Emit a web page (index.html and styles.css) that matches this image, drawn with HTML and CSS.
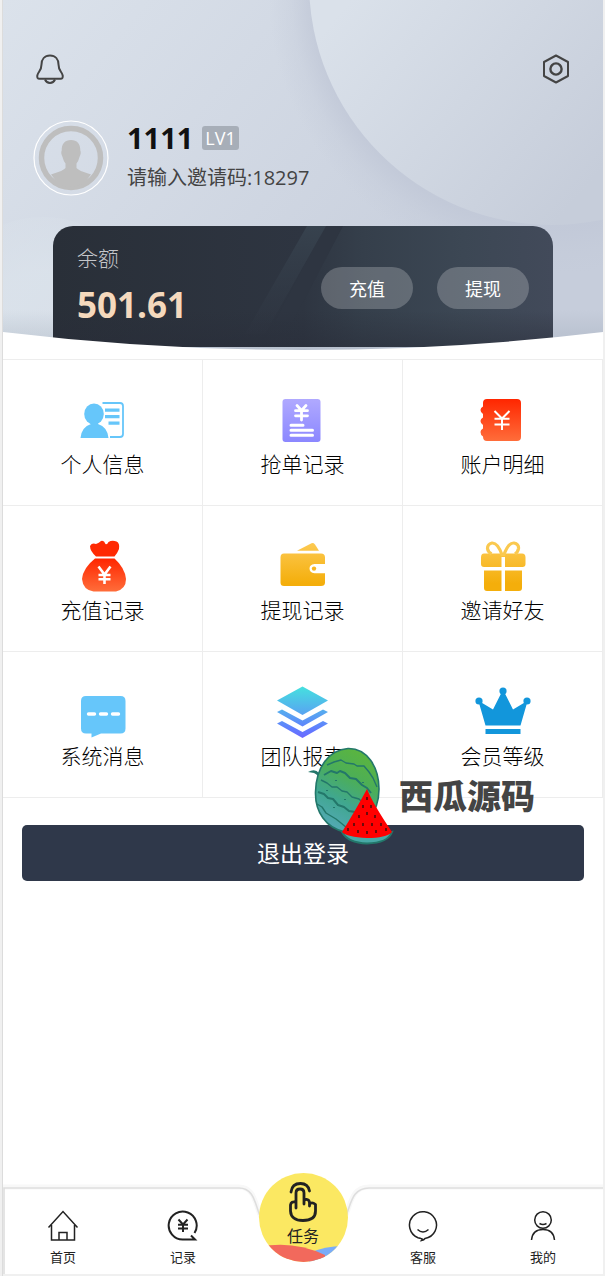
FILE: index.html
```html
<!DOCTYPE html>
<html lang="zh-CN">
	<head>
		<meta charset="utf-8" />
		<meta name="viewport" content="width=device-width, initial-scale=1">
		<title>我的</title>
		<link rel="stylesheet" href="styles.css">
	</head>
	<body>

		<div class="app">

			<!-- 头部 -->
			<div class="header">
				<svg class="header-bg" viewBox="0 0 600 359" preserveAspectRatio="none">
					<defs>
						<linearGradient id="bg" x1="0" y1="0" x2="1" y2="0.5">
							<stop offset="0" stop-color="#dbe2eb" />
							<stop offset="1" stop-color="#c6cddb" />
						</linearGradient>
						<linearGradient id="ball" gradientUnits="userSpaceOnUse" x1="330" y1="20" x2="560" y2="215">
							<stop offset="0" stop-color="#dae1ea" />
							<stop offset="1" stop-color="#c6cdda" />
						</linearGradient>
						<radialGradient id="shade">
							<stop offset="0.84" stop-color="#c2c9d8" stop-opacity="0.9" />
							<stop offset="0.92" stop-color="#c2c9d8" stop-opacity="0.3" />
							<stop offset="1" stop-color="#c2c9d8" stop-opacity="0" />
						</radialGradient>
						<radialGradient id="glow">
							<stop offset="0.5" stop-color="#dce4ec" stop-opacity="0.7" />
							<stop offset="1" stop-color="#dce4ec" stop-opacity="0.2" />
						</radialGradient>
						<linearGradient id="edge" x1="0" y1="0" x2="0" y2="1">
							<stop offset="0" stop-color="#9aa5b3" stop-opacity="0" />
							<stop offset="1" stop-color="#9aa5b3" stop-opacity="0.5" />
						</linearGradient>
					</defs>
					<rect width="600" height="359" fill="url(#bg)" />
					<circle cx="40" cy="325" r="108" fill="url(#glow)" />
					<circle cx="549" cy="-10" r="284" fill="url(#shade)" />
					<circle cx="549" cy="-18" r="243" fill="url(#ball)" />
					<rect y="310" width="600" height="49" fill="url(#edge)" />
				</svg>

				<div class="tools">
					<button class="tool" aria-label="消息">
						<svg width="30" height="30" viewBox="0 0 30 30" fill="none" stroke="#444" stroke-width="2">
							<path d="M15 1.500C9.500 1.500 6.500 5.500 6.500 10.500C6.500 17 3 17.500 2.300 21.500Q1.800 24.800 4.500 24.800H25.500Q28.200 24.800 27.700 21.500C27 17.500 23.500 17 23.500 10.500C23.500 5.500 20.500 1.500 15 1.500Z" />
							<path d="M10 25.500Q11.500 29 15 29Q18.500 29 20 25.500" />
						</svg>
					</button>
					<button class="tool" aria-label="设置">
						<svg width="30" height="30" viewBox="0 0 30 30" fill="none" stroke="#444" stroke-width="2">
							<path d="M15 1.500L27 8V22L15 28.500L3 22V8Z" stroke-linejoin="round" />
							<circle cx="15" cy="15" r="5.600" stroke-width="2.400" />
						</svg>
					</button>
				</div>

				<div class="user">
					<svg class="avatar" viewBox="0 0 76 76">
						<circle cx="38" cy="38" r="37" fill="none" stroke="#fff" stroke-width="1.200" />
						<circle cx="38" cy="38" r="29.500" fill="none" stroke="#bebebe" stroke-width="5.500" />
						<path d="M38 20C44 20 47.500 24 47.300 30.500Q48.500 33 46.500 37Q45.500 41 43.500 43.500V48Q45 50.500 58 54.500Q50 67 38 67Q26 67 18 54.500Q31 50.500 32.500 48V43.500Q30.500 41 29.500 37Q27.500 33 28.700 30.500C28.500 24 32 20 38 20Z" fill="#bebebe" />
					</svg>
					<div class="user-info">
						<div class="name-row">
							<strong class="name">1111</strong>
							<span class="level">LV1</span>
						</div>
						<div class="invite">请输入邀请码:18297</div>
					</div>
				</div>

				<div class="card">
					<svg class="card-bg" viewBox="0 0 500 121" preserveAspectRatio="none">
						<defs>
							<linearGradient id="cardFill">
								<stop offset="0" stop-color="#292f38" />
								<stop offset="0.5" stop-color="#2e3541" />
								<stop offset="0.62" stop-color="#353f4b" />
								<stop offset="0.82" stop-color="#3c4754" />
								<stop offset="1" stop-color="#424a5a" />
							</linearGradient>
							<linearGradient id="stripe" x1="0" y1="0" x2="0" y2="1">
								<stop offset="0" stop-color="#37424e" />
								<stop offset="1" stop-color="#303743" stop-opacity="0.300" />
							</linearGradient>
							<linearGradient id="cardShade" x1="0" y1="0" x2="0" y2="1">
								<stop offset="0.700" stop-color="#282c38" stop-opacity="0" />
								<stop offset="1" stop-color="#282c38" stop-opacity="0.500" />
							</linearGradient>
						</defs>
						<rect width="500" height="121" fill="url(#cardFill)" />
						<path d="M272 0H290L240 95H222Z" fill="#2e3541" />
						<path d="M254 0H273L212 108H192Z" fill="url(#stripe)" />
						<rect width="500" height="121" fill="url(#cardShade)" />
					</svg>
					<div class="balance">
						<div class="balance-label">余额</div>
						<div class="balance-num">501.61</div>
					</div>
					<div class="card-btns">
						<button class="card-btn">充值</button>
						<button class="card-btn">提现</button>
					</div>
				</div>

				<!-- 底部弧形 -->
				<svg class="curve" viewBox="0 0 600 27" preserveAspectRatio="none">
					<path d="M0 0Q300 36 600 0V27H0Z" fill="#fff" />
				</svg>
			</div>

			<!-- 九宫格 -->
			<div class="menu">
				<a class="menu-item" href="#">
					<svg class="menu-icon" viewBox="0 0 60 60">
						<g fill="#66c6fa">
							<ellipse cx="21" cy="24" rx="9.800" ry="10.600" />
							<path d="M18 31H25V34Q34.500 37 35.500 48H7.500Q8.500 37 18 34Z" />
							<path d="M32 18.500H46.500V21.700H32ZM32 25H46.500V28.200H32ZM35.500 31.500H46.500V34.700H35.500Z" />
						</g>
						<path d="M29.500 13H47Q50 13 50 16V44Q50 47 47 47H37" fill="none" stroke="#66c6fa" stroke-width="1.800" />
					</svg>
					<span>个人信息</span>
				</a>
				<a class="menu-item" href="#">
					<svg class="menu-icon" viewBox="0 0 60 60">
						<defs>
							<linearGradient id="purple" x1="0" y1="0" x2="0" y2="1">
								<stop offset="0" stop-color="#b0a9ff" />
								<stop offset="1" stop-color="#8b87ff" />
							</linearGradient>
						</defs>
						<rect x="9.500" y="9" width="38" height="43" rx="3" fill="url(#purple)" />
						<path d="M24 15.500L28.500 20.500L33 15.500M28.500 20V30M22.500 20.700H34.500M22.500 25.800H34.500" stroke="#fff" stroke-width="2.800" stroke-linecap="round" fill="none" />
						<path d="M18 35.200H30M18 40.200H39.500M18 45.200H39.500" stroke="#fff" stroke-width="3" stroke-linecap="round" />
					</svg>
					<span>抢单记录</span>
				</a>
				<a class="menu-item" href="#">
					<svg class="menu-icon" viewBox="0 0 60 60">
						<defs>
							<linearGradient id="red" x1="0" y1="0" x2="0" y2="1">
								<stop offset="0" stop-color="#ff2600" />
								<stop offset="1" stop-color="#ff6d3a" />
							</linearGradient>
						</defs>
						<path d="M14 9H44Q48 9 48 13V47Q48 51 44 51H14Q10 51 10 46.500Q7.500 45 7.500 42Q7.500 39.500 10 38.500V35Q7.500 33.500 7.500 31Q7.500 28.500 10 27.500V24Q7.500 22.500 7.500 20Q7.500 17.500 10 16.500V13Q10 9 14 9Z" fill="url(#red)" />
						<path d="M21.500 21L29 28.500L36.500 21M29 28.500V40M21.500 28.800H36.500M21.500 34.500H36.500" stroke="#fff" stroke-width="2" fill="none" />
					</svg>
					<span>账户明细</span>
				</a>
				<a class="menu-item" href="#">
					<svg class="menu-icon" viewBox="0 0 60 60">
						<path d="M23 20.500Q17 15 17 10Q19 6.500 23 8Q26 7 28 5Q31 4 32.500 8Q34 9 35.500 6Q39 4 43.500 5.500Q47 7 46 13Q44 18 41.500 20.500Z" fill="#ff2a03" />
						<path d="M22 22.500H41.500Q52 32 53 43Q53 53 43 55.500H20.500Q10 54 9 43Q10 32 22 22.500Z" fill="url(#red)" />
						<path d="M25.500 30.500L31.500 38.500L37.500 30.500M31.500 38.500V48M25.500 39H37.500M25.500 43.200H37.500" stroke="#fff" stroke-width="2.600" fill="none" />
					</svg>
					<span>充值记录</span>
				</a>
				<a class="menu-item" href="#">
					<svg class="menu-icon" viewBox="0 0 60 60">
						<defs>
							<linearGradient id="gold" gradientUnits="userSpaceOnUse" x1="0" y1="5" x2="0" y2="55">
								<stop offset="0" stop-color="#fdcb55" />
								<stop offset="0.850" stop-color="#f4ae0b" />
								<stop offset="1" stop-color="#f4ae0b" />
							</linearGradient>
						</defs>
						<path d="M24 14.800L38.500 7.200Q40.500 6.500 42 8.500L46 14.800Z" fill="url(#gold)" />
						<path d="M11 17.500H48Q52 17.500 52 21.500V28H41.500Q36.500 28.500 36.500 32.500Q36.500 36.500 41.500 37.200H52V46.500Q52 50 48 50H11Q7.500 50 7.500 46.500V21.500Q7.500 17.500 11 17.500Z" fill="url(#gold)" />
						<circle cx="41" cy="32.600" r="2.200" fill="#f7b622" />
					</svg>
					<span>提现记录</span>
				</a>
				<a class="menu-item" href="#">
					<svg class="menu-icon" viewBox="0 0 60 60">
						<path d="M11 17.500H49Q52.500 17.500 52.500 21.500V28Q52.500 31 49.500 31H32V21H28.500V31H11Q8 31 8 28V21.500Q8 17.500 11 17.500ZM11 34.500H28.500V55H14Q11 55 11 52ZM32 34.500H49V52Q49 55 46 55H32Z" fill="url(#gold)" />
						<path d="M29.500 20Q25 6.500 19 7Q14.500 8 14.500 12.500Q15 16 18.500 18M30.500 20Q35 6.500 41 7Q46 8 45.500 12.500Q45 16 42 18" fill="none" stroke="#fac94f" stroke-width="3.200" />
					</svg>
					<span>邀请好友</span>
				</a>
				<a class="menu-item" href="#">
					<svg class="menu-icon" viewBox="0 0 60 60">
						<path d="M13 14H47.500Q52.500 14 52.500 19V46.500Q52.500 51.500 47.500 51.500H28L18.500 55.500V51.500H13Q8 51.500 8 46.500V19Q8 14 13 14Z" fill="#66c6fa" />
						<path d="M15.500 32H21.500M27.500 32H33.500M39.500 32H45.500" stroke="#fff" stroke-width="3.400" stroke-linecap="round" />
					</svg>
					<span>系统消息</span>
				</a>
				<a class="menu-item" href="#">
					<svg class="menu-icon" viewBox="0 0 60 60">
						<defs>
							<linearGradient id="stack" gradientUnits="userSpaceOnUse" x1="0" y1="5" x2="0" y2="56">
								<stop offset="0" stop-color="#45e0df" />
								<stop offset="0.500" stop-color="#57a8f0" />
								<stop offset="0.850" stop-color="#6179ff" />
								<stop offset="1" stop-color="#6c68ff" />
							</linearGradient>
						</defs>
						<path d="M29.500 4.500L55 18.500L29.500 33L4 18.500ZM4 30L9 27.500L29.500 38.500L50 27.500L55 30L29.500 44.500ZM4 41.500L9 39L29.500 50L50 39L55 41.500L29.500 56Z" fill="url(#stack)" />
					</svg>
					<span>团队报表</span>
				</a>
				<a class="menu-item" href="#">
					<svg class="menu-icon" viewBox="0 0 60 60">
						<g fill="#1296db">
							<circle cx="30" cy="9" r="3.600" />
							<circle cx="6" cy="19" r="3.600" />
							<circle cx="54" cy="19" r="3.600" />
							<path d="M28.800 10H31.200L40 27.500L52.500 20L54 21L47.500 43.500H12.500L6 21L7.500 20L20 27.500ZM12.500 47H47.500V52H12.500Z" />
						</g>
					</svg>
					<span>会员等级</span>
				</a>
			</div>

			<div class="logout-box">
				<button class="logout">退出登录</button>

				<!-- 水印 -->
				<div class="watermark">
					<svg width="90" height="98" viewBox="0 0 90 98">
						<defs>
							<linearGradient id="melon" x1="0.700" y1="0" x2="0.300" y2="1">
								<stop offset="0" stop-color="#5cb53d" />
								<stop offset="0.350" stop-color="#4cae57" />
								<stop offset="0.650" stop-color="#40a78f" />
								<stop offset="1" stop-color="#55a9b8" />
							</linearGradient>
						</defs>
						<path d="M1 25Q8 21 12 26Q14 29 18 29L16 34Q11 28 7 26Z" fill="#23776a" />
						<path d="M41 1.500C60 1 72 20 72 42C72 67 55 85 38 85C19 81 8 65 8.500 45C9 20 22 3 41 1.500Z" fill="url(#melon)" stroke="#23776a" stroke-width="1.600" />
						<g fill="none" stroke="#23776a" stroke-width="1.400" stroke-linejoin="round">
							<path d="M20 18L27 15L34 13L39 16L47 17L50 19L57 19L62 25L66 31L70 40" />
							<path d="M17 28L24 24L30 26L33 24L38 26L43 31L49 32L55 38L60 41L64 46" stroke-width="2" />
							<path d="M14 33L20 36L25 40L30 40L35 44L40 45L45 50L52 52L57 57" />
							<path d="M11 45L17 47L21 51L26 52L31 58L37 60L42 64L48 65" stroke-width="2" />
							<path d="M10 57L15 60L19 66L24 69L29 72L34 76L40 81" />
						</g>
						<path d="M29 33V34M20 43V44M38 52V53M27 60V61M56 35V36" stroke="#23776a" stroke-width="2" />
						<path d="M35 85Q60 93 85 85Q81 96 60 96.500Q41 96 35 85Z" fill="#48a9a6" stroke="#23776a" stroke-width="2" />
						<path d="M60 42Q66 57 85 85Q79 91 60 91Q40 90 35 85Q47 66 60 42Z" fill="#f00" />
						<path d="M60 50V53M56 58V61M64 58V61M60 65V68M52 68V71M68 68V71M47 76V79M56 76V79M65 76V79M74 76V79M41 81V84M51 83V86M60 84V87M69 83V86M79 81V84" stroke="#4a0d0d" stroke-width="1.600" />
					</svg>
					<span>西瓜源码</span>
				</div>
			</div>

			<!-- 底部导航 -->
			<div class="tabbar">
				<svg class="tabbar-bg" viewBox="0 0 600 96" preserveAspectRatio="none">
					<path d="M0 10H236C252 10 252 30 258 38V96H342V38C348 30 348 10 366 10H600V96H0Z" fill="#fff" />
					<path d="M0 9H236C252 9 252 27 258 39M342 39C348 27 348 9 366 9H600" fill="none" stroke="#f8f8f8" stroke-width="5" />
					<path d="M1 96V10H236C252 10 252 28 258 40M342 40C348 28 348 10 366 10H600" fill="none" stroke="#dedede" stroke-width="1.600" />
				</svg>
				<a class="tab" href="#">
					<svg width="32" height="32" viewBox="0 0 32 32" fill="none" stroke="#222" stroke-width="1.500">
						<path d="M1.500 17.500L16 1.500L30.500 17.500M4.500 15V30H27.500V15M12 30V22.500H20V30" />
					</svg>
					<span>首页</span>
				</a>
				<a class="tab" href="#">
					<svg width="32" height="32" viewBox="0 0 32 32" fill="none" stroke="#222" stroke-width="2">
						<path d="M27.500 23A14 14 0 1 0 16 29.500H28L24 25.500" />
						<path d="M11.500 9.500L16 14.500L20.500 9.500M16 14V22M11 14.800H21M11 18.500H21" />
					</svg>
					<span>记录</span>
				</a>
				<a class="tab tab-task" href="#">
					<svg class="task-bg" viewBox="0 0 89 89">
						<defs>
							<clipPath id="round"><circle cx="44.500" cy="44.500" r="44.500" /></clipPath>
						</defs>
						<g clip-path="url(#round)">
							<rect width="89" height="89" fill="#fbe862" />
							<path d="M50 80Q68 72 89 73V89H50Z" fill="#7aacf8" />
							<path d="M0 74Q34 67 66 82V89H0Z" fill="#f2695c" />
						</g>
						<g transform="translate(30 9)" fill="none" stroke="#222" stroke-width="2.800" stroke-linecap="round" stroke-linejoin="round">
							<path d="M2 10Q3 1.500 11.500 1.500Q19 1.500 20.500 9" />
							<path d="M7 26V11Q7 7 11 7Q15 7 15 11V22M15 20Q15 17 18 17.500Q20.500 18 20.500 21V24M20.500 22Q23 19.500 26.500 22.500V29Q26.500 38.500 14 38.500Q2 38.500 1.500 29V23Q2 19 7 20" />
						</g>
					</svg>
					<span>任务</span>
				</a>
				<a class="tab" href="#">
					<svg width="32" height="32" viewBox="0 0 32 32" fill="none" stroke="#222" stroke-width="1.500">
						<path d="M14 28.500Q16 28.500 14.500 30.500Q17 30 18 28.500A13.500 13.500 0 1 0 11 27.700L14 28.500" />
						<path d="M10.500 19.500Q16 24.500 21.500 19.500" />
					</svg>
					<span>客服</span>
				</a>
				<a class="tab" href="#">
					<svg width="32" height="32" viewBox="0 0 32 32" fill="none" stroke="#222" stroke-width="1.500">
						<circle cx="16" cy="10" r="8.300" />
						<path d="M12.500 13.500Q16 15.500 19.500 13.500M4.500 30Q5.500 19.500 16 19.500Q26.500 19.500 27.500 30" />
					</svg>
					<span>我的</span>
				</a>
			</div>

		</div>

	</body>
</html>
```
FILE: styles.css
```css
* {
	box-sizing: border-box;
}

body {
	margin: 0;
	background-color: #f0f0f0;
	font-family: "Open Sans", "Noto Sans CJK SC", sans-serif;
	color: #333;
}

a {
	color: inherit;
	text-decoration: none;
}

button {
	border: 0;
	padding: 0;
	background: none;
	font-family: inherit;
	color: inherit;
}

svg {
	display: block;
}

.app {
	display: flex;
	flex-direction: column;
	min-height: 100vh;
	margin: 0 2px;
	border-left: 1px solid #dcdcdc;
	background-color: #fff;
}

/* 头部 */
.header {
	position: relative;
	height: 359px;
	padding-top: 54px;
	overflow: hidden;
}

.header-bg,
.card-bg,
.tabbar-bg {
	position: absolute;
	top: 0;
	left: 0;
	width: 100%;
	height: 100%;
}

.tools,
.user {
	position: relative;
	display: flex;
	padding: 0 32px;
}

.tools {
	justify-content: space-between;
}

.tool {
	width: 30px;
	height: 30px;
}

.user {
	align-items: center;
	gap: 18px;
	margin-top: 34px;
	padding-left: 30px;
}

.avatar {
	width: 76px;
	height: 76px;
}

.name-row {
	display: flex;
	align-items: center;
	gap: 9px;
	height: 40px;
}

.name {
	font-size: 29px;
	line-height: 40px;
	color: #111;
}

.level {
	padding: 0 3px;
	border-radius: 3px;
	background-color: #a7aeb8;
	font-size: 18px;
	line-height: 24px;
	color: #fff;
}

.invite {
	font-size: 20px;
	line-height: 40px;
	color: #444;
}

.card {
	position: relative;
	display: flex;
	justify-content: space-between;
	height: 121px;
	margin: 28px 50px 0;
	padding: 0 24px;
	border-radius: 20px 20px 0 0;
	overflow: hidden;
}

.balance,
.card-btns {
	position: relative;
}

.balance {
	padding-top: 15px;
}

.balance-label {
	font-size: 21px;
	font-weight: 300;
	line-height: 34px;
	color: #c4c6ca;
}

.balance-num {
	font-size: 35px;
	font-weight: bold;
	line-height: 60px;
	color: #f5d9bd;
}

.card-btns {
	display: flex;
	gap: 24px;
	padding-top: 41px;
}

.card-btn {
	width: 92px;
	height: 42px;
	border-radius: 21px;
	background-color: rgba(255, 255, 255, 0.22);
	font-size: 18px;
	color: #fff;
}

.curve {
	position: absolute;
	left: 0;
	bottom: 0;
	width: 100%;
	height: 27px;
}

/* 九宫格 */
.menu {
	display: grid;
	grid-template-columns: repeat(3, 1fr);
	border-top: 1px solid #ededed;
}

.menu-item {
	display: flex;
	flex-direction: column;
	align-items: center;
	height: 146px;
	padding-top: 30px;
	border-right: 1px solid #ededed;
	border-bottom: 1px solid #ededed;
	font-size: 21px;
	font-weight: 300;
	line-height: 28px;
	color: #000;
}

.menu-icon {
	width: 60px;
	height: 60px;
}

.logout-box {
	position: relative;
	padding: 27px 19px;
}

.logout {
	display: block;
	width: 100%;
	height: 56px;
	border-radius: 5px;
	background-color: #2f384a;
	font-size: 23px;
	line-height: 54px;
	color: #fff;
}

/* 水印 */
.watermark {
	position: absolute;
	top: -51px;
	left: 304px;
	display: flex;
	align-items: center;
	gap: 2px;
	font-size: 34px;
	font-weight: 900;
	line-height: 46px;
	color: #444;
	white-space: nowrap;
	pointer-events: none;
}

/* 底部导航 */
.tabbar {
	position: relative;
	display: flex;
	height: 98px;
	margin-top: auto;
	border-bottom: 2px solid #f0f0f0;
}

.tab {
	position: relative;
	flex: 1;
	display: flex;
	flex-direction: column;
	align-items: center;
	gap: 6px;
	padding-top: 32px;
	font-size: 13px;
	line-height: 18px;
	color: #222;
}

.tab-task {
	padding-top: 46px;
	font-size: 16px;
	line-height: 24px;
}

.tab-task span {
	position: relative;
}

.task-bg {
	position: absolute;
	top: -5px;
	width: 89px;
	height: 89px;
}
```
